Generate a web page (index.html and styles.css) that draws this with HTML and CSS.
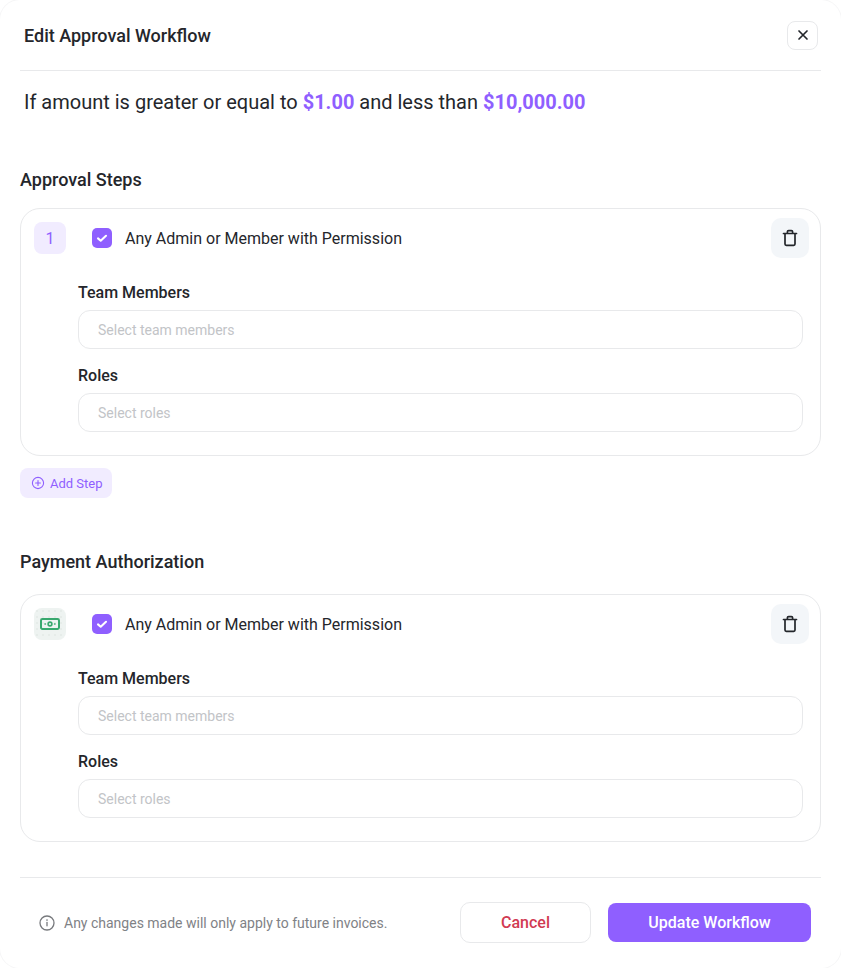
FILE: index.html
```html
<!DOCTYPE html>
<html lang="en">
<head>
    <meta charset="UTF-8">
    <meta name="viewport" content="width=device-width, initial-scale=1.0">
    <title>Edit Approval Workflow</title>
    <link rel="stylesheet" href="styles.css">
</head>
<body>
    <div class="modal">
        <header class="modal-header">
            <h1 class="modal-title">Edit Approval Workflow</h1>
            <button class="close-btn" type="button" aria-label="Close">
                <svg width="12" height="12" viewBox="0 0 12 12" fill="none" stroke="#23262b" stroke-width="1.7" stroke-linecap="round"><path d="M2 2l8 8M10 2l-8 8"/></svg>
            </button>
        </header>

        <p class="condition">If amount is greater or equal to <strong>$1.00</strong> and less than <strong>$10,000.00</strong></p>

        <h2 class="section-title first">Approval Steps</h2>
        <section class="step-card">
            <div class="step-top">
                <div class="step-badge">1</div>
                <span class="checkbox">
                    <svg width="14" height="14" viewBox="0 0 14 14" fill="none" stroke="#fff" stroke-width="2.1" stroke-linecap="round" stroke-linejoin="round"><path d="M3 7.4l2.7 2.3L11 4.8"/></svg>
                </span>
                <span class="step-label">Any Admin or Member with Permission</span>
                <button class="trash-btn" type="button" aria-label="Delete">
                    <svg width="20" height="20" viewBox="0 0 20 20" fill="none" stroke="#23262b" stroke-width="1.7" stroke-linecap="round" stroke-linejoin="round"><path d="M3.5 5.5h13M5 5.5V16a1.3 1.3 0 0 0 1.3 1.3h7.4A1.3 1.3 0 0 0 15 16V5.5M7.4 5.5V3.8a1.2 1.2 0 0 1 1.2-1.2h2.8a1.2 1.2 0 0 1 1.2 1.2v1.7"/></svg>
                </button>
            </div>
            <div class="field">
                <label class="field-label">Team Members</label>
                <div class="select-input">Select team members</div>
            </div>
            <div class="field">
                <label class="field-label">Roles</label>
                <div class="select-input">Select roles</div>
            </div>
        </section>

        <button class="add-step" type="button">
            <svg width="14" height="14" viewBox="0 0 14 14" fill="none" stroke="#8f5fff" stroke-width="1.1" stroke-linecap="round"><circle cx="7" cy="7" r="5.6"/><path d="M7 4.6v4.8M4.6 7h4.8"/></svg>
            Add Step
        </button>

        <h2 class="section-title second">Payment Authorization</h2>
        <section class="step-card">
            <div class="step-top">
                <div class="step-badge money">
                    <svg width="20" height="14" viewBox="0 0 20 14" fill="none"><rect x="1" y="2" width="18" height="10" rx="1.4" stroke="#38a86e" stroke-width="2"/><circle cx="10" cy="7" r="1.9" stroke="#38a86e" stroke-width="1.6"/><path d="M5 7h.4M14.6 7h.4" stroke="#38a86e" stroke-width="1.6" stroke-linecap="round"/></svg>
                </div>
                <span class="checkbox">
                    <svg width="14" height="14" viewBox="0 0 14 14" fill="none" stroke="#fff" stroke-width="2.1" stroke-linecap="round" stroke-linejoin="round"><path d="M3 7.4l2.7 2.3L11 4.8"/></svg>
                </span>
                <span class="step-label">Any Admin or Member with Permission</span>
                <button class="trash-btn" type="button" aria-label="Delete">
                    <svg width="20" height="20" viewBox="0 0 20 20" fill="none" stroke="#23262b" stroke-width="1.7" stroke-linecap="round" stroke-linejoin="round"><path d="M3.5 5.5h13M5 5.5V16a1.3 1.3 0 0 0 1.3 1.3h7.4A1.3 1.3 0 0 0 15 16V5.5M7.4 5.5V3.8a1.2 1.2 0 0 1 1.2-1.2h2.8a1.2 1.2 0 0 1 1.2 1.2v1.7"/></svg>
                </button>
            </div>
            <div class="field">
                <label class="field-label">Team Members</label>
                <div class="select-input">Select team members</div>
            </div>
            <div class="field">
                <label class="field-label">Roles</label>
                <div class="select-input">Select roles</div>
            </div>
        </section>

        <footer class="modal-footer">
            <div class="footer-note">
                <svg width="16" height="16" viewBox="0 0 16 16" fill="none" stroke="#77797d" stroke-width="1.3" stroke-linecap="round"><circle cx="8" cy="8" r="7"/><path d="M8 7.4v3.4"/><path d="M8 5h.01" stroke-width="1.7"/></svg>
                <span>Any changes made will only apply to future invoices.</span>
            </div>
            <button class="btn-cancel" type="button">Cancel</button>
            <button class="btn-update" type="button">Update Workflow</button>
        </footer>
    </div>
</body>
</html>
```

FILE: styles.css
```css
:root {
    --primary: #8f5fff;
    --text: #24262b;
    --border: #e8e9eb;
    --muted: #808286;
    --placeholder: #c2c4c7;
}

* {
    margin: 0;
    padding: 0;
    box-sizing: border-box;
}

body {
    background: #fff;
    color: var(--text);
    font-family: 'Roboto', sans-serif;
    overflow: hidden;
}

button {
    font-family: inherit;
    cursor: pointer;
}

.modal {
    width: 841px;
    height: 968px;
    padding: 0 20px;
    border-radius: 20px;
    box-shadow: 0 0 0 1px #f6f6f7;
}

.modal-header {
    display: flex;
    justify-content: space-between;
    align-items: center;
    height: 71px;
    padding: 0 3px 0 4px;
    border-bottom: 1px solid var(--border);
}

.modal-title {
    font-size: 18px;
    font-weight: 500;
}

.close-btn {
    display: flex;
    align-items: center;
    justify-content: center;
    width: 31px;
    height: 29px;
    background: #fff;
    border: 1px solid var(--border);
    border-radius: 8px;
}

.condition {
    font-size: 20px;
    line-height: 24px;
    padding: 19px 4px 0;
}

.condition strong {
    font-weight: 700;
    color: var(--primary);
}

.section-title {
    font-size: 18px;
    font-weight: 500;
    line-height: 22px;
    margin-bottom: 17px;
}

.section-title.first {
    margin-top: 55px;
}

.section-title.second {
    margin-top: 53px;
    margin-bottom: 21px;
}

.step-card {
    height: 248px;
    padding: 9px 11px 0 13px;
    border: 1px solid var(--border);
    border-radius: 20px;
}

.step-top {
    display: flex;
    align-items: center;
    height: 40px;
    margin-bottom: 25px;
}

.step-badge {
    display: flex;
    align-items: center;
    justify-content: center;
    width: 32px;
    height: 32px;
    background: #f1ecff;
    color: var(--primary);
    border-radius: 8px;
    font-size: 16px;
}

.step-badge.money {
    background-color: #eef3f1;
    background-image: radial-gradient(circle, #e6ece9 1px, transparent 1px);
    background-size: 6px 6px;
}

.checkbox {
    display: flex;
    align-items: center;
    justify-content: center;
    width: 20px;
    height: 20px;
    margin-left: 26px;
    background: var(--primary);
    border-radius: 5px;
}

.step-label {
    flex: 1;
    margin-left: 13px;
    font-size: 16px;
}

.trash-btn {
    display: flex;
    align-items: center;
    justify-content: center;
    width: 38px;
    height: 40px;
    background: #f3f6f9;
    border: none;
    border-radius: 10px;
}

.field {
    margin-left: 44px;
    margin-right: 6px;
    margin-bottom: 17px;
}

.field-label {
    display: block;
    font-size: 16px;
    font-weight: 500;
    line-height: 19px;
    margin-bottom: 8px;
}

.select-input {
    display: flex;
    align-items: center;
    height: 39px;
    padding: 0 19px;
    border: 1px solid var(--border);
    border-radius: 12px;
    color: var(--placeholder);
    font-size: 14px;
}

.add-step {
    display: flex;
    align-items: center;
    gap: 5px;
    width: 92px;
    height: 30px;
    margin-top: 12px;
    padding-left: 11px;
    background: #f1ecff;
    color: var(--primary);
    border: none;
    border-radius: 8px;
    font-size: 13px;
}

.modal-footer {
    display: flex;
    align-items: center;
    height: 89px;
    margin-top: 35px;
    padding: 0 10px 0 19px;
    border-top: 1px solid var(--border);
}

.footer-note {
    display: flex;
    align-items: center;
    gap: 9px;
    flex: 1;
    margin-top: 2px;
    color: var(--muted);
    font-size: 14px;
}

.btn-cancel {
    width: 131px;
    height: 41px;
    margin-right: 17px;
    background: #fff;
    color: #d13a52;
    border: 1px solid var(--border);
    border-radius: 10px;
    font-size: 16px;
    font-weight: 500;
}

.btn-update {
    width: 203px;
    height: 39px;
    background: var(--primary);
    color: #fff;
    border: none;
    border-radius: 8px;
    font-size: 16px;
    font-weight: 500;
}
```
